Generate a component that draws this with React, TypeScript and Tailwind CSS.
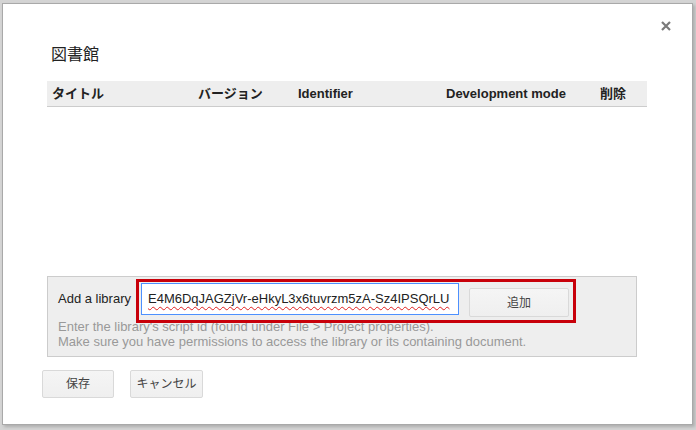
const font = "font-['Liberation_Sans','Noto_Sans_CJK_JP',sans-serif]";

function GrayButton({ label, className = "" }: { label: string; className?: string }) {
  return (
    <button
      className={`h-[28px] rounded-[2px] border border-[#d9d9d9] bg-gradient-to-b from-[#f5f5f5] to-[#efefef] text-[12px] text-[#444] ${className}`}
    >
      {label}
    </button>
  );
}

export default function App() {
  return (
    <div className={`w-[696px] h-[430px] bg-[#d4d4d4] pl-[2px] pt-[3px] ${font}`}>
      <div className="relative w-[691px] h-[422px] bg-white border border-[#a9a9a9] shadow-[2px_2px_3px_rgba(0,0,0,0.18)]">
        {/* close */}
        <svg
          className="absolute top-[17px] right-[21px]"
          width="10"
          height="10"
          viewBox="0 0 10 10"
        >
          <path d="M1 1L9 9M9 1L1 9" stroke="#7a7a7a" strokeWidth="2.2" />
        </svg>

        <div className="pt-[41px] pl-[44px]">
          <div className="h-[20px] leading-[20px] pl-[4px] text-[16px] text-[#222]">図書館</div>

          {/* table header */}
          <div className="mt-[16px] w-[600px] h-[26px] bg-[#eeeeee] border-b border-[#cccccc] grid grid-cols-[146px_100px_148px_154px_1fr] items-center pl-[5px] text-[13px] font-bold text-[#222]">
            <span>タイトル</span>
            <span>バージョン</span>
            <span>Identifier</span>
            <span>Development mode</span>
            <span>削除</span>
          </div>

          {/* add library panel */}
          <div className="relative mt-[169px] w-[590px] border border-[#cccccc] bg-[#eeeeee] pl-[10px] pt-[6px] pb-[7px]">
            <div className="flex items-start">
              <span className="h-[32px] leading-[32px] text-[13px] text-[#222]">Add a library</span>
              <div className="ml-[10px] w-[318px] h-[32px] border border-[#4d90fe] bg-white pl-[6px] leading-[30px] text-[13px] text-[#222] overflow-hidden whitespace-nowrap">
                <span className="underline decoration-wavy decoration-[#e02020] decoration-1 underline-offset-[3px]">
                  E4M6DqJAGZjVr-eHkyL3x6tuvrzm5zA-Sz4IPSQrLU
                </span>
              </div>
              <GrayButton label="追加" className="ml-[10px] mt-[5px] w-[100px] h-[29px]" />
            </div>
            <div className="mt-[2px] text-[13px] leading-[15px] text-[#999]">
              <div>Enter the library's script id (found under File &gt; Project properties).</div>
              <div>Make sure you have permissions to access the library or its containing document.</div>
            </div>
            {/* highlight annotation */}
            <div className="absolute left-[88px] top-[2px] w-[440px] h-[44px] border-[3px] border-[#c8000a]" />
          </div>

          {/* footer */}
          <div className="mt-[13px] -ml-[5px] flex gap-[16px]">
            <GrayButton label="保存" className="w-[72px]" />
            <GrayButton label="キャンセル" className="w-[73px]" />
          </div>
        </div>
      </div>
    </div>
  );
}
